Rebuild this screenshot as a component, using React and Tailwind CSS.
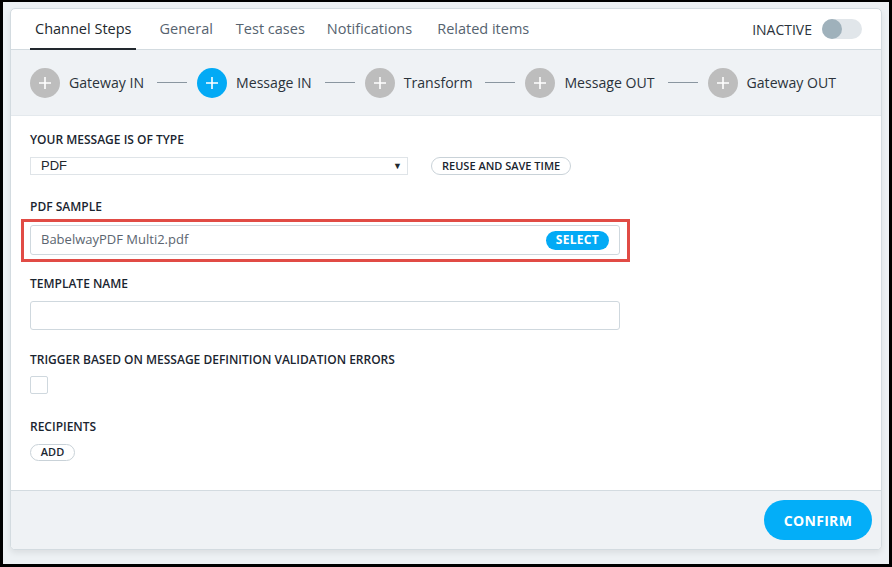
import React from "react";

const font = { fontFamily: '"Open Sans", "Noto Sans", sans-serif' };

function Plus({ active }) {
  return (
    <div className={`w-[30px] h-[30px] rounded-full flex items-center justify-center ${active ? "bg-[#03aaf5]" : "bg-[#bdbdbd]"}`}>
      <svg width="14" height="14" viewBox="0 0 14 14">
        <path d="M7 1v12M1 7h12" stroke="white" strokeWidth="1.6" />
      </svg>
    </div>
  );
}

function Step({ label, active, last }) {
  return (
    <div className="flex items-center">
      <Plus active={active} />
      <span className="ml-[9px] text-[14.1px] text-[#2b333b]">{label}</span>
      {!last && <div className="ml-[13px] mr-[10px] w-[30px] h-px bg-[#8a96a0]" />}
    </div>
  );
}

function Label({ children }) {
  return <div className="pt-[1px] text-[12px] font-semibold text-[#1a2530] leading-[16px]">{children}</div>;
}

export default function App() {
  return (
    <div style={font} className="w-[892px] h-[567px] box-border border-black border-l-[3px] border-r-[3px] border-t-2 border-b-[3px] bg-[#edf1f4] pl-[7px] pt-[6px]">
      <div className="w-[872px] h-[542px] rounded-[5px] border border-[#d3dbe0] bg-white flex flex-col overflow-hidden shadow-[0_3px_6px_rgba(0,0,0,0.08)]">
        {/* Tabs */}
        <div className="h-[41px] shrink-0 flex items-stretch border-b border-[#d3dbe0] pl-[19px] pr-[19px]">
          <div className="relative px-[5px] flex items-center text-[14.5px] text-[#22282e]">
            Channel Steps
            <div className="absolute left-0 right-0 bottom-[-1px] h-[2px] bg-[#22282e]" />
          </div>
          <div className="ml-[23px] flex items-center text-[14.5px] text-[#56636f]">General</div>
          <div className="ml-[23px] flex items-center text-[14.5px] text-[#56636f]">Test cases</div>
          <div className="ml-[22px] flex items-center text-[14.5px] text-[#56636f]">Notifications</div>
          <div className="ml-[25px] flex items-center text-[14.5px] text-[#56636f]">Related items</div>
          <div className="ml-auto flex items-center">
            <span className="text-[14px] text-[#2b333b]">INACTIVE</span>
            <div className="ml-[10px] w-[40px] h-[20px] rounded-full bg-[#e1e6ea] relative">
              <div className="absolute left-0 top-0 w-[20px] h-[20px] rounded-full bg-[#9fb1bb]" />
            </div>
          </div>
        </div>
        {/* Steps */}
        <div className="h-[66px] shrink-0 bg-[#eff2f5] flex items-center pl-[19px] border-b border-[#e4e9ed]">
          <Step label="Gateway IN" />
          <Step label="Message IN" active />
          <Step label="Transform" />
          <Step label="Message OUT" />
          <Step label="Gateway OUT" last />
        </div>
        {/* Content */}
        <div className="flex-1 pl-[19px] pt-[15px]">
          <Label>YOUR MESSAGE IS OF TYPE</Label>
          <div className="flex items-center mt-[9px]">
            <div className="w-[378px] h-[18px] border border-[#dfe4e8] flex items-center justify-between pl-[10px] pr-[5px]">
              <span className="text-[13px] text-[#22282e]" style={{ fontFamily: '"Liberation Sans", Arial, sans-serif' }}>PDF</span>
              <span className="text-[9px] text-[#22282e]">▼</span>
            </div>
            <div className="ml-[23px] h-[18px] px-[10px] rounded-full border border-[#c9d2d8] flex items-center text-[11px] font-semibold text-[#1a2530]">
              REUSE AND SAVE TIME
            </div>
          </div>
          <div className="mt-[23px]"><Label>PDF SAMPLE</Label></div>
          <div className="mt-[4px] ml-[-9px] w-[609px] h-[43px] border-[3px] border-[#e14b45] pt-[3px] pl-[6px] pr-[7px]">
            <div className="h-[30px] rounded-[3px] border border-[#cfd8de] flex items-center justify-between pl-[10px] pr-[10px]">
              <span className="text-[13px] text-[#5b6570]">BabelwayPDF Multi2.pdf</span>
              <div className="h-[19px] px-[10px] rounded-full bg-[#03aaf5] text-white text-[12px] font-bold flex items-center tracking-[0.3px]">SELECT</div>
            </div>
          </div>
          <div className="mt-[13px]"><Label>TEMPLATE NAME</Label></div>
          <div className="mt-[9px] w-[590px] h-[29px] rounded-[3px] border border-[#cfd8de]" />
          <div className="mt-[21px]"><Label>TRIGGER BASED ON MESSAGE DEFINITION VALIDATION ERRORS</Label></div>
          <div className="mt-[8px] w-[18px] h-[18px] rounded-[2px] border border-[#cfd8de]" />
          <div className="mt-[24px]"><Label>RECIPIENTS</Label></div>
          <div className="mt-[9px] w-[45px] h-[17px] rounded-full border border-[#c9d2d8] flex items-center justify-center text-[11px] font-semibold text-[#1a2530]">ADD</div>
        </div>
        {/* Footer */}
        <div className="h-[59px] shrink-0 bg-[#eff2f5] border-t border-[#d3dbe0] flex items-center justify-end pr-[9px]">
          <div className="w-[108px] h-[40px] rounded-full bg-[#03aef8] text-white text-[14px] font-bold flex items-center justify-center tracking-[0.3px]">CONFIRM</div>
        </div>
      </div>
    </div>
  );
}
